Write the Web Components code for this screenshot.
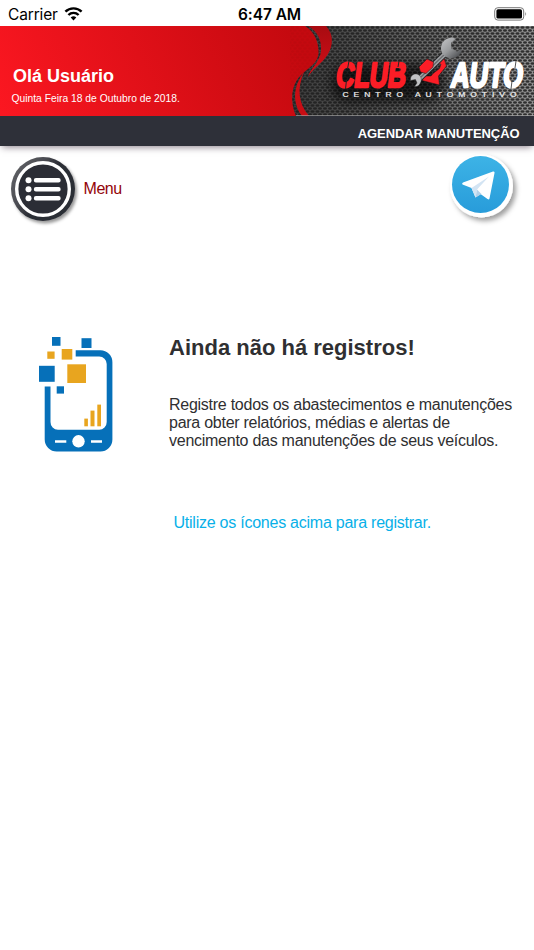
<!DOCTYPE html>
<html lang="pt-BR">
<head>
<meta charset="utf-8">
<title>Club Auto</title>
<style>
  body {
    margin: 0;
    background: #fff;
    font-family: "Liberation Sans", Arial, sans-serif;
    color: #2f2f31;
  }
</style>
</head>
<body>
<club-app></club-app>

<script>
// Small helper: attach an open shadow root and fill it
class BaseElement extends HTMLElement {
  constructor() {
    super();
    this.attachShadow({ mode: 'open' });
  }
  connectedCallback() {
    this.shadowRoot.innerHTML = this.render();
  }
}

// Phone status bar: carrier, time, battery
class StatusBar extends BaseElement {
  render() {
    return `
      <style>
        :host {
          display: grid;
          grid-template-columns: 1fr auto 1fr;
          align-items: center;
          height: 26px;
          padding: 2px 6px 0 8px;
          box-sizing: border-box;
          font: 15.5px/26px Inter, sans-serif;
          color: #000;
        }
        .left { display: flex; align-items: center; gap: 6px; letter-spacing: -0.15px; }
        .time { font-weight: 600; font-size: 15.5px; padding-left: 3px; letter-spacing: -.05px; }
        .right { display: flex; justify-content: flex-end; }
        svg { display: block; margin-bottom: 2px; }
      </style>
      <div class="left"><span>Carrier</span>
        <svg width="19" height="14" viewBox="0 0 19 14">
          <path d="M9.5 13.4 6.7 10.5a4 4 0 0 1 5.6 0z" fill="#000"/>
          <path d="M4.4 8a7.2 7.2 0 0 1 10.2 0M1.4 4.7a11.5 11.5 0 0 1 16.2 0" fill="none" stroke="#000" stroke-width="2.4"/>
        </svg>
      </div>
      <div class="time">6:47 AM</div>
      <div class="right">
        <svg width="34" height="14" viewBox="0 0 34 14">
          <rect x=".7" y=".7" width="29" height="12.4" rx="3.2" fill="none" stroke="#777"/>
          <rect x="2.4" y="2.3" width="25.6" height="9.2" rx="1.6" fill="#000"/>
          <path d="M31.3 4.8q1.7 2.1 0 4.2z" fill="#777"/>
        </svg>
      </div>
    `;
  }
}

// Banner artwork: red field, metal mesh and the brand logo
class BrandBanner extends BaseElement {
  render() {
    return `
      <style>
        :host { display: grid; height: 90px; overflow: hidden; }
        svg, .greeting { grid-area: 1 / 1; }
        svg { display: block; }
        .greeting { z-index: 1; color: #fff; padding: 40px 0 0 11.5px; }
        text { font-family: "Liberation Sans", Arial, sans-serif; font-weight: bold; }
        .tagline { font-weight: normal; letter-spacing: 3.85px; }
      </style>
      <svg width="534" height="90" viewBox="0 0 534 90">
        <defs>
          <linearGradient id="red" gradientUnits="userSpaceOnUse" x1="0" y1="85" x2="270" y2="-40">
            <stop offset="0" stop-color="#fb1721"/>
            <stop offset="1" stop-color="#c5090f"/>
          </linearGradient>
          <linearGradient id="ribbon" x1="0" y1="0" x2="0" y2="1">
            <stop offset="0" stop-color="#a80b11"/>
            <stop offset="1" stop-color="#d40f17"/>
          </linearGradient>
          <linearGradient id="metal" x1="0" y1="0" x2="1" y2="0">
            <stop offset="0" stop-color="#3a3a3a"/>
            <stop offset=".4" stop-color="#5a5a5a"/>
            <stop offset="1" stop-color="#929292"/>
          </linearGradient>
          <linearGradient id="steel" gradientUnits="userSpaceOnUse" x1="443" y1="14" x2="458" y2="30">
            <stop offset="0" stop-color="#bcbdbf"/>
            <stop offset=".5" stop-color="#9a9c9e"/>
            <stop offset="1" stop-color="#55575a"/>
          </linearGradient>
          <pattern id="mesh" width="5" height="6" patternUnits="userSpaceOnUse">
            <ellipse cx="2.5" cy="1.5" rx="2" ry="1.3" fill="#1d1d1d"/>
            <ellipse cx="0" cy="4.5" rx="2" ry="1.3" fill="#1d1d1d"/>
            <ellipse cx="5" cy="4.5" rx="2" ry="1.3" fill="#1d1d1d"/>
          </pattern>
          <pattern id="weave" width="5" height="6" patternUnits="userSpaceOnUse">
            <ellipse cx="2.5" cy="1.5" rx="1.8" ry="1.2" fill="#8d0508"/>
            <ellipse cx="0" cy="4.5" rx="1.8" ry="1.2" fill="#8d0508"/>
            <ellipse cx="5" cy="4.5" rx="1.8" ry="1.2" fill="#8d0508"/>
          </pattern>
          <filter id="soft" x="-30%" y="-80%" width="160%" height="260%"><feGaussianBlur stdDeviation="6"/></filter>
        </defs>
        <rect x="285" width="249" height="90" fill="url(#metal)"/>
        <rect x="285" width="249" height="90" fill="url(#mesh)" opacity=".85"/>
        <path d="M0 0H305C315 6 319 17 318.5 28C317 39 307 42 299 51C291 61 290 77 296 90H0Z" fill="url(#red)"/>
        <path d="M290 0H305C315 6 319 17 318.5 28C317 39 307 42 299 51L290 62Z" fill="url(#weave)" opacity=".12"/>
        <path d="M308 0H326C334 8 333 20 328 28C322 38 312 43 308 51C310 43 320 36 321 25C322 14 317 5 308 0Z" fill="url(#ribbon)"/>
        <path d="M304 46C293 60 292 77 302 90H309C298 77 297 62 304 46Z" fill="#c90d14"/>
        <rect x="332" y="38" width="112" height="38" rx="16" fill="#000" opacity=".65" filter="url(#soft)"/>

        <g transform="translate(335 61) skewX(-7) scale(.72 1)" stroke-linejoin="round">
          <text font-size="35" fill="#fb1d26" stroke="#fb1d26" stroke-width="2.4">CLUB</text>
        </g>
        <g transform="translate(450 61) skewX(-7) scale(.73 1)" stroke-linejoin="round">
          <text font-size="35" fill="#fff" stroke="#fff" stroke-width="2.6">AUTO</text>
        </g>
        <!-- stencil cuts in the lettering -->
        <g stroke="#242424" stroke-width="1">
          <path d="M349 35 347.5 43M346.5 54 345.5 63M399 35 398 41"/>
          <path d="M516 35 515 42M512 55 511 63" stroke="#555"/>
        </g>
        <g transform="translate(342.5 70.8) scale(1.3 1)">
          <text class="tagline" font-size="6.5" fill="#eee" stroke="#eee" stroke-width=".2">CENTRO AUTOMOTIVO</text>
        </g>

        <!-- wrench held by the fist -->
        <path d="M436 33 443.5 30.5 446.5 40 438.5 50 439.5 59 422 54.5 424.5 50 431 50 433 47.5 439.5 42.5 441 38 437 38Z" fill="#fb1d26" stroke="#191919" stroke-width=".5"/>
        <path d="M417 55 448 25" stroke="#26282a" stroke-width="6"/>
        <path d="M417 55 448 25" stroke="#a1a3a6" stroke-width="4.4"/>
        <path d="M421 51 446 27" stroke="#66686b" stroke-width="1.3"/>
        <path d="M451.5 11.5C445 12 441 17 441 22.5C441 29 446.5 32.5 452 32C457.5 31.5 462 27.5 462 23L457 25.5 451.5 22.5 451 17 455.5 13Q454 11.5 451.5 11.5Z" fill="url(#steel)"/>
        <path d="M410.5 54.5C410 50 413 47.5 416.5 48C420 48.5 422 52 421 55.5C420 59 417.5 61 414.5 60.5L417 57 415.5 53.5Z" fill="#c1c3c5" stroke="#333" stroke-width=".5"/>
        <path d="M419 41 427 33 433.5 36 433 41 426 47.500 420.500 46Z" fill="#fb1d26" stroke="#191919" stroke-width=".5"/>
        <rect x="296" y="89" width="238" height="1" fill="#aaa" opacity=".6"/>
      </svg>
      <div class="greeting"><slot></slot></div>
    `;
  }
}

// Dark strip below the banner
class ActionBar extends BaseElement {
  render() {
    return `
      <style>
        :host {
          display: flex;
          align-items: center;
          justify-content: flex-end;
          height: 30px;
          padding: 5px 14.5px 0 0;
          box-sizing: border-box;
          background: #2e3039;
          box-shadow: 0 3px 7px -2px rgba(40, 20, 40, .55);
          color: #fff;
          font-size: 13px;
          font-weight: bold;
          letter-spacing: -.08px;
        }
      </style>
      <slot></slot>
    `;
  }
}

// Round list button with its label
class MenuButton extends BaseElement {
  render() {
    return `
      <style>
        :host { display: flex; align-items: center; gap: 4.5px; color: #930308; font-size: 16px; letter-spacing: -.45px; cursor: pointer; }
        svg { display: block; }
      </style>
      <svg width="74" height="76" viewBox="0 0 74 76">
        <defs>
          <linearGradient id="ring" x1="0" y1="0" x2="1" y2=".6">
            <stop offset=".1" stop-color="#5f6064"/>
            <stop offset=".4" stop-color="#4b4c52"/>
            <stop offset=".6" stop-color="#2b2d35"/>
          </linearGradient>
          <filter id="shadow" x="-20%" y="-20%" width="150%" height="150%">
            <feDropShadow dx="2" dy="2.5" stdDeviation="1.6" flood-opacity=".4"/>
          </filter>
        </defs>
        <circle cx="38" cy="38" r="32" fill="url(#ring)" filter="url(#shadow)"/>
        <circle cx="38" cy="38" r="26.3" fill="#2b2d35" stroke="#fff" stroke-width="3.4"/>
        <path d="M31 29.2H53.5M31 38.2H53.5M31 47.2H53.5" stroke="#fff" stroke-width="4.4" stroke-linecap="round"/>
        <g fill="#fff">
          <circle cx="23.5" cy="29.2" r="3"/>
          <circle cx="23.5" cy="38.2" r="3"/>
          <circle cx="23.5" cy="47.2" r="3"/>
        </g>
      </svg>
      <slot></slot>
    `;
  }
}

// Paper plane button
class SendButton extends BaseElement {
  render() {
    return `
      <style>
        :host { display: block; cursor: pointer; }
        svg { display: block; }
      </style>
      <svg width="80" height="80" viewBox="0 0 80 80">
        <defs>
          <linearGradient id="sky" x1="0" y1="0" x2="0" y2="1">
            <stop offset="0" stop-color="#3db3e6"/>
            <stop offset="1" stop-color="#289cda"/>
          </linearGradient>
          <filter id="shadow" x="-20%" y="-20%" width="150%" height="150%">
            <feDropShadow dx="3" dy="3.5" stdDeviation="2.8" flood-opacity=".38"/>
          </filter>
        </defs>
        <circle cx="37.5" cy="35" r="31.5" fill="#fff" filter="url(#shadow)"/>
        <circle cx="36.5" cy="33.5" r="28.5" fill="url(#sky)"/>
        <path d="M18.5 33.5Q17.5 32.5 19 31.5L49 20.5Q51 20 50.5 22L45.5 47.5Q45 49 43.5 48L36.5 43 31.5 46.5 27.5 37Z" fill="#fff"/>
        <path d="M27.5 37 45 25.5 33 38.5 31.5 46.5Z" fill="#d3e4f3"/>
        <path d="M31.5 46.5 33 38.5 37.5 43Z" fill="#b5d1e9"/>
      </svg>
    `;
  }
}

// Empty list message with the phone illustration
class EmptyState extends BaseElement {
  render() {
    return `
      <style>
        :host { display: flex; padding: 98px 10px 0 25px; }
        svg { display: block; flex: none; margin-right: 34px; }
        .copy { padding-top: 9px; }
        h1 { margin: 0 0 35px; font-size: 22px; line-height: 27px; }
        p { margin: 0 0 64px; font-size: 16px; line-height: 18px; letter-spacing: -.26px; white-space: nowrap; }
        .hint { color: #08b0e8; font-size: 16px; line-height: 18px; letter-spacing: -.24px; padding-left: 4.5px; }
      </style>
      <svg width="110" height="140" viewBox="0 0 110 140">
        <path d="M50.7 25.3H75.5A12 12 0 0 1 87.4 37.3V114.5A12 12 0 0 1 75.4 126.5H31.7A12 12 0 0 1 19.7 114.5V61.5H25.5V97A7.5 7.5 0 0 0 33 104.7H74A7.5 7.5 0 0 0 81.7 97V39A7.5 7.5 0 0 0 74.2 31.5H50.7Z" fill="#0670b9"/>
        <circle cx="53.5" cy="116.3" r="6.2" fill="#fff"/>
        <path d="M30 116.5H41.3M66 116.5H77" stroke="#fff" stroke-width="2.6"/>
        <g fill="#0670b9">
          <rect x="27" y="12" width="8.5" height="8.8"/>
          <rect x="56.5" y="13.2" width="10" height="9.8"/>
          <rect x="14" y="40.8" width="15.7" height="16"/>
          <rect x="31.7" y="61.3" width="7.3" height="7.3"/>
        </g>
        <g fill="#e8a51f">
          <rect x="22.3" y="26.5" width="7.3" height="7.3"/>
          <rect x="36.7" y="24" width="10.6" height="10.6"/>
          <rect x="42.3" y="39.3" width="18.7" height="18.7"/>
          <rect x="59.3" y="93.6" width="3.6" height="7.7"/>
          <rect x="65.5" y="85.6" width="4" height="15.7"/>
          <rect x="72.3" y="79.6" width="3.7" height="21.7"/>
        </g>
      </svg>
      <div class="copy">
        <h1>Ainda não há registros!</h1>
        <p>Registre todos os abastecimentos e manutenções<br>para obter relatórios, médias e alertas de<br>vencimento das manutenções de seus veículos.</p>
        <div class="hint">Utilize os ícones acima para registrar.</div>
      </div>
    `;
  }
}

class ClubApp extends BaseElement {
  render() {
    return `
      <style>
        :host { display: block; width: 534px; height: 950px; overflow: hidden; background: #fff; }
        .name { font-size: 18px; font-weight: bold; line-height: 20px; padding-left: 1.5px; }
        .date { font-size: 10.3px; line-height: 12px; margin-top: 7px; }
        .tools { display: flex; justify-content: space-between; align-items: flex-start; padding: 4.5px 10px 0 5px; height: 76px; }
      </style>
      <status-bar></status-bar>
      <brand-banner>
        <div class="name">Olá Usuário</div>
        <div class="date">Quinta Feira 18 de Outubro de 2018.</div>
      </brand-banner>
      <action-bar>AGENDAR MANUTENÇÃO</action-bar>
      <div class="tools">
        <menu-button>Menu</menu-button>
        <send-button></send-button>
      </div>
      <empty-state></empty-state>
    `;
  }
}

customElements.define('status-bar', StatusBar);
customElements.define('brand-banner', BrandBanner);
customElements.define('action-bar', ActionBar);
customElements.define('menu-button', MenuButton);
customElements.define('send-button', SendButton);
customElements.define('empty-state', EmptyState);
customElements.define('club-app', ClubApp);
</script>
</body>
</html>
